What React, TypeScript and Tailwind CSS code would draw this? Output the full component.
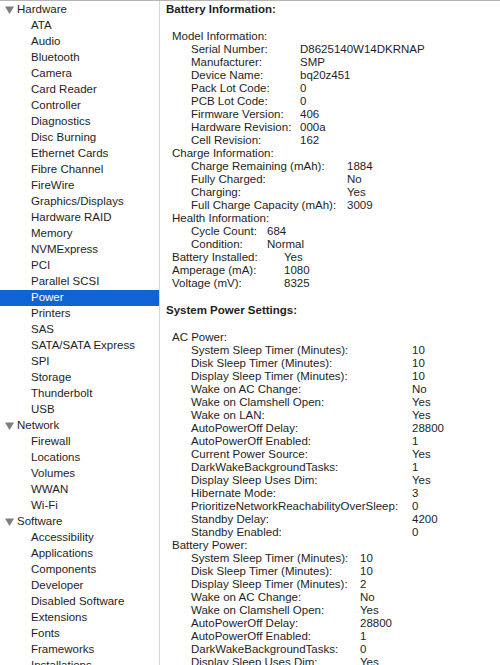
const sidebar: { name: string; items: string[] }[] = [
  {
    name: "Hardware",
    items: [
      "ATA",
      "Audio",
      "Bluetooth",
      "Camera",
      "Card Reader",
      "Controller",
      "Diagnostics",
      "Disc Burning",
      "Ethernet Cards",
      "Fibre Channel",
      "FireWire",
      "Graphics/Displays",
      "Hardware RAID",
      "Memory",
      "NVMExpress",
      "PCI",
      "Parallel SCSI",
      "Power",
      "Printers",
      "SAS",
      "SATA/SATA Express",
      "SPI",
      "Storage",
      "Thunderbolt",
      "USB",
    ],
  },
  {
    name: "Network",
    items: ["Firewall", "Locations", "Volumes", "WWAN", "Wi-Fi"],
  },
  {
    name: "Software",
    items: [
      "Accessibility",
      "Applications",
      "Components",
      "Developer",
      "Disabled Software",
      "Extensions",
      "Fonts",
      "Frameworks",
      "Installations",
    ],
  },
];

type Pair = [string, string];

const modelInfo: Pair[] = [
  ["Serial Number:", "D8625140W14DKRNAP"],
  ["Manufacturer:", "SMP"],
  ["Device Name:", "bq20z451"],
  ["Pack Lot Code:", "0"],
  ["PCB Lot Code:", "0"],
  ["Firmware Version:", "406"],
  ["Hardware Revision:", "000a"],
  ["Cell Revision:", "162"],
];

const chargeInfo: Pair[] = [
  ["Charge Remaining (mAh):", "1884"],
  ["Fully Charged:", "No"],
  ["Charging:", "Yes"],
  ["Full Charge Capacity (mAh):", "3009"],
];

const healthInfo: Pair[] = [
  ["Cycle Count:", "684"],
  ["Condition:", "Normal"],
];

const batteryMisc: Pair[] = [
  ["Battery Installed:", "Yes"],
  ["Amperage (mA):", "1080"],
  ["Voltage (mV):", "8325"],
];

const acPower: Pair[] = [
  ["System Sleep Timer (Minutes):", "10"],
  ["Disk Sleep Timer (Minutes):", "10"],
  ["Display Sleep Timer (Minutes):", "10"],
  ["Wake on AC Change:", "No"],
  ["Wake on Clamshell Open:", "Yes"],
  ["Wake on LAN:", "Yes"],
  ["AutoPowerOff Delay:", "28800"],
  ["AutoPowerOff Enabled:", "1"],
  ["Current Power Source:", "Yes"],
  ["DarkWakeBackgroundTasks:", "1"],
  ["Display Sleep Uses Dim:", "Yes"],
  ["Hibernate Mode:", "3"],
  ["PrioritizeNetworkReachabilityOverSleep:", "0"],
  ["Standby Delay:", "4200"],
  ["Standby Enabled:", "0"],
];

const batteryPower: Pair[] = [
  ["System Sleep Timer (Minutes):", "10"],
  ["Disk Sleep Timer (Minutes):", "10"],
  ["Display Sleep Timer (Minutes):", "2"],
  ["Wake on AC Change:", "No"],
  ["Wake on Clamshell Open:", "Yes"],
  ["AutoPowerOff Delay:", "28800"],
  ["AutoPowerOff Enabled:", "1"],
  ["DarkWakeBackgroundTasks:", "0"],
  ["Display Sleep Uses Dim:", "Yes"],
  ["Hibernate Mode:", "3"],
];

const Disclosure = () => (
  <svg width="9" height="8" viewBox="0 0 9 8" className="shrink-0">
    <path d="M0 0.5 H9 L4.5 8 Z" fill="#7d7d7d" />
  </svg>
);

const Rows = ({ rows, labelW }: { rows: Pair[]; labelW: string }) => (
  <>
    {rows.map(([k, v]) => (
      <div key={k} className="flex h-[13px] items-center whitespace-nowrap">
        <span className={`${labelW} shrink-0`}>{k}</span>
        <span>{v}</span>
      </div>
    ))}
  </>
);

const Heading = ({ children }: { children: string }) => (
  <div className="flex h-[13px] items-center pl-[6px]">{children}</div>
);

const App = () => {
  return (
    <div
      className="flex h-[665px] w-[500px] overflow-hidden border-t border-[#b4b4b4] bg-white text-[11.5px] text-[#1e1e1e]"
      style={{ fontFamily: '"Liberation Sans", Arial, sans-serif' }}
    >
      {/* Source list */}
      <div className="w-[160px] shrink-0 border-r border-[#d6d6d6] pt-[1px]">
        {sidebar.map((section) => (
          <div key={section.name}>
            <div className="flex h-4 items-center gap-[2px] pl-[5px]">
              <Disclosure />
              <span className="pl-[1px]">{section.name}</span>
            </div>
            {section.items.map((item) =>
              item === "Power" ? (
                <div
                  key={item}
                  className="flex h-4 items-center bg-[#0f63d3] pl-[31px] text-white"
                >
                  {item}
                </div>
              ) : (
                <div key={item} className="flex h-4 items-center pl-[31px]">
                  {item}
                </div>
              ),
            )}
          </div>
        ))}
      </div>

      {/* Detail pane */}
      <div className="flex-1 pl-[6px] pt-[2px] text-[11.5px] leading-[13px]">
        <div className="flex h-[13px] items-center font-bold">Battery Information:</div>

        <div className="mt-[14px]">
          <Heading>Model Information:</Heading>
          <div className="pl-[25px]">
            <Rows rows={modelInfo} labelW="w-[109px]" />
          </div>
          <Heading>Charge Information:</Heading>
          <div className="pl-[25px]">
            <Rows rows={chargeInfo} labelW="w-[156px]" />
          </div>
          <Heading>Health Information:</Heading>
          <div className="pl-[25px]">
            <Rows rows={healthInfo} labelW="w-[76px]" />
          </div>
          <div className="pl-[6px]">
            <Rows rows={batteryMisc} labelW="w-[112px]" />
          </div>
        </div>

        <div className="mt-[14px] flex h-[13px] items-center font-bold">
          System Power Settings:
        </div>

        <div className="mt-[14px]">
          <Heading>AC Power:</Heading>
          <div className="pl-[25px]">
            <Rows rows={acPower} labelW="w-[221px]" />
          </div>
          <Heading>Battery Power:</Heading>
          <div className="pl-[25px]">
            <Rows rows={batteryPower} labelW="w-[169px]" />
          </div>
        </div>
      </div>
    </div>
  );
};

export default App;
